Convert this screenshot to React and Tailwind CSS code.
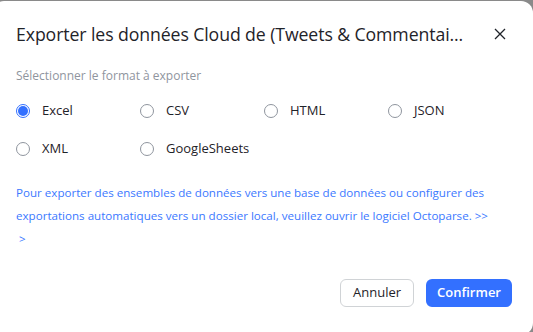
import React, { useState } from 'react';

const formats = [
  ['Excel', 'CSV', 'HTML', 'JSON'],
  ['XML', 'GoogleSheets'],
];

const Radio = ({ label, checked, onSelect }) => (
  <button onClick={onSelect} className="flex w-[124px] items-center gap-3 text-left">
    {checked ? (
      <span className="flex h-[14px] w-[14px] items-center justify-center rounded-full border border-[#3370ff]">
        <span className="h-[10px] w-[10px] rounded-full bg-[#3370ff]" />
      </span>
    ) : (
      <span className="h-[14px] w-[14px] rounded-full border border-[#8f959e] bg-white" />
    )}
    <span className="text-[13px] text-[#1f2329]">{label}</span>
  </button>
);

export default function App() {
  const [selected, setSelected] = useState('Excel');

  return (
    <div
      className="h-[332px] w-[533px] overflow-hidden bg-[#8a8a8a] pt-px"
      style={{ fontFamily: '"Open Sans", "Noto Sans", sans-serif' }}
    >
      <div className="ml-[-8px] flex h-[334px] w-[541px] flex-col rounded-[12px] bg-white pl-[24px] pr-[21px]">
        {/* header */}
        <div className="flex h-[66px] items-center justify-between">
          <h2 className="text-[17.7px] tracking-[-0.1px] text-[#1f2329]">
            Exporter les données Cloud de (Tweets &amp; Commentai...
          </h2>
          <button className="flex h-6 w-6 items-center justify-center text-[#1f2329]">
            <svg width="12" height="12" viewBox="0 0 12 12" fill="none" stroke="currentColor" strokeWidth="1.3">
              <path d="M1 1l10 10M11 1L1 11" />
            </svg>
          </button>
        </div>

        {/* format */}
        <p className="text-[12px] text-[#8f959e]">Sélectionner le format à exporter</p>
        <div className="mt-[17px] flex flex-col gap-[20px]">
          {formats.map((row, i) => (
            <div key={i} className="flex h-[18px] items-center">
              {row.map((f) => (
                <Radio key={f} label={f} checked={selected === f} onSelect={() => setSelected(f)} />
              ))}
            </div>
          ))}
        </div>

        {/* info */}
        <p className="mt-[23px] text-[11.6px] leading-[23px] text-[#3b78ff]">
          Pour exporter des ensembles de données vers une base de données ou configurer des exportations automatiques vers un dossier local, veuillez ouvrir le logiciel Octoparse. &gt;&gt;
          <br />
          <span className="pl-[3px]">&gt;</span>
        </p>

        {/* footer */}
        <div className="mt-[29px] flex justify-end gap-3">
          <button className="h-[28px] rounded-[6px] border border-[#d0d3d6] px-[12px] text-[13px] text-[#1f2329]">
            Annuler
          </button>
          <button className="h-[28px] rounded-[6px] bg-[#3370ff] px-[11px] text-[13px] font-semibold text-white">
            Confirmer
          </button>
        </div>
      </div>
    </div>
  );
}
